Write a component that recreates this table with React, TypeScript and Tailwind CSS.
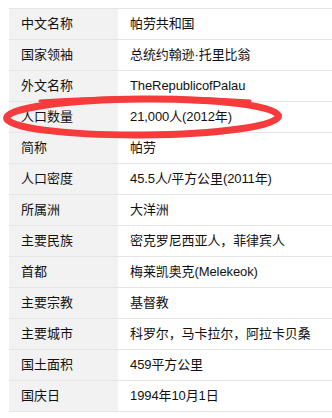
import React from "react";

const ROWS: [string, string][] = [
  ["中文名称", "帕劳共和国"],
  ["国家领袖", "总统约翰逊·托里比翁"],
  ["外文名称", "TheRepublicofPalau"],
  ["人口数量", "21,000人(2012年)"],
  ["简称", "帕劳"],
  ["人口密度", "45.5人/平方公里(2011年)"],
  ["所属洲", "大洋洲"],
  ["主要民族", "密克罗尼西亚人，菲律宾人"],
  ["首都", "梅莱凯奥克(Melekeok)"],
  ["主要宗教", "基督教"],
  ["主要城市", "科罗尔，马卡拉尔，阿拉卡贝桑"],
  ["国土面积", "459平方公里"],
  ["国庆日", "1994年10月1日"],
];

export default function App() {
  return (
    <div className="relative w-[332px] h-[418px] overflow-hidden bg-white pt-2 pl-[9px] font-['Liberation_Sans','Noto_Sans_CJK_SC',sans-serif] text-[13px] text-[#111]">
      <div className="border-t border-[#e6e6e6]">
        {ROWS.map(([k, v]) => (
          <div key={k} className="flex h-[31px] border-b border-[#e6e6e6]">
            <div className="w-[109px] shrink-0 bg-[#f2f2f2] pl-3 flex items-center">{k}</div>
            <div className="flex-1 pl-3 flex items-center whitespace-nowrap tracking-[-0.1px]">{v}</div>
          </div>
        ))}
      </div>

      {/* hand drawn red circle around population row */}
      <svg className="absolute left-0 top-0 pointer-events-none" width="332" height="418">
        <ellipse cx="142.5" cy="117" rx="136" ry="18" fill="none" stroke="#f53b3b" strokeWidth="7" transform="rotate(-0.4 142.5 117)" />
        <path d="M40 101 Q142 94 250 101" fill="none" stroke="#f53b3b" strokeWidth="3" strokeLinecap="round" />
      </svg>
    </div>
  );
}
